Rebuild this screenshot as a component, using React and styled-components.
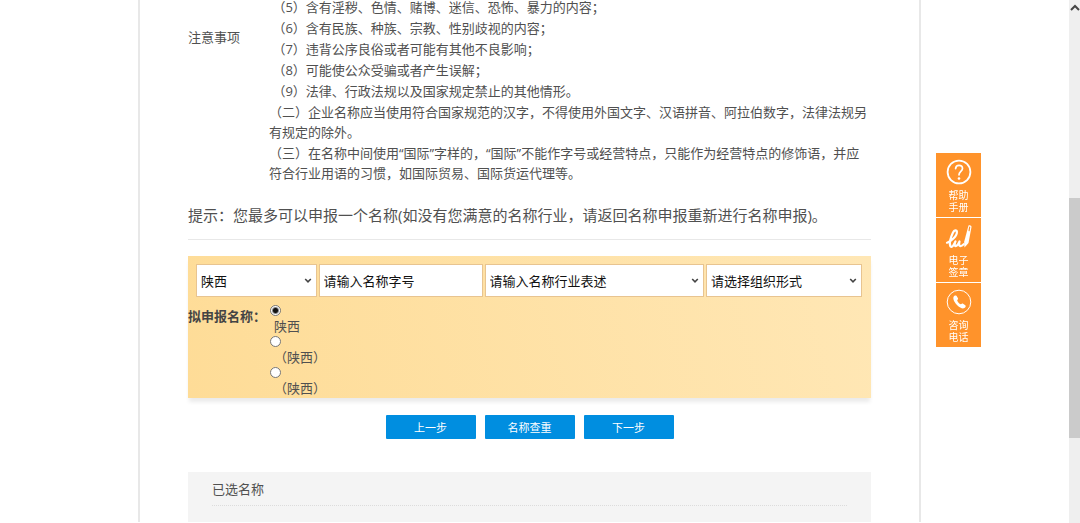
import React, { useState } from 'react';
import styled, { createGlobalStyle } from 'styled-components';

const colors = {
  text: '#505050',
  line: '#e8e8e8',
  blue: '#008ee0',
  orange: '#ff932b',
  field: '#e8c490'
};

const fonts = '"Open Sans", "Noto Sans CJK SC", sans-serif';

const GlobalStyle = createGlobalStyle`
  * {
    box-sizing: border-box;
  }
  body {
    margin: 0;
    overflow: hidden;
    background: #fff;
    color: ${colors.text};
    font-family: ${fonts};
    font-size: 13px;
    line-height: 20px;
    text-spacing-trim: space-all;
  }
  p, h2 {
    margin: 0;
  }
`;

const subRules = [
  '（5）含有淫秽、色情、赌博、迷信、恐怖、暴力的内容；',
  '（6）含有民族、种族、宗教、性别歧视的内容；',
  '（7）违背公序良俗或者可能有其他不良影响；',
  '（8）可能使公众受骗或者产生误解；',
  '（9）法律、行政法规以及国家规定禁止的其他情形。'
];

const rules = [
  '（二）企业名称应当使用符合国家规范的汉字，不得使用外国文字、汉语拼音、阿拉伯数字，法律法规另有规定的除外。',
  '（三）在名称中间使用“国际”字样的，“国际”不能作字号或经营特点，只能作为经营特点的修饰语，并应符合行业用语的习惯，如国际贸易、国际货运代理等。'
];

const names = ['陕西', '（陕西）', '（陕西）'];

const HelpIcon = () => (
  <svg width="26" height="26" viewBox="0 0 26 26" fill="none" stroke="#fff" strokeLinecap="round">
    <circle cx="13" cy="13" r="11.4" strokeWidth="1.8" />
    <path d="M9.600 9.600c.2-2.200 1.600-3.200 3.400-3.200s3.500 1.100 3.500 3.200c0 2.800-3.500 3-3.500 6.200" strokeWidth="1.7" />
    <circle cx="13" cy="19.500" r="1.300" fill="#fff" stroke="none" />
  </svg>
);

const SignIcon = () => (
  <svg width="28" height="26" viewBox="0 0 28 26" fill="none" stroke="#fff" strokeLinecap="round" strokeLinejoin="round">
    <path
      d="M2 18.800c4.200-1.200 10.200-7 9.900-11-.2-2.200-2.600-1.800-3.900.7C6.300 12 4 18.500 5.300 22c.6 1.600 2.400.6 3.400-1.200l1.800-3.400c-.9 2-1.300 4.900.3 4.800 1.800-.1 3-3.400 3.700-4.800-.5 2.200-.7 4.800.9 4.700 1.200-.1 2.200-.8 3.300-1.900"
      strokeWidth="2.200"
    />
    <path d="M23.500 1.400c1.500-.7 3.200.1 3 1.700l-3 15.800-4 4.500-.4-5.400z" fill="#fff" stroke="none" />
    <path d="M24.700 3.200l-.6 3.400" stroke={colors.orange} strokeWidth="1.200" />
  </svg>
);

const PhoneIcon = () => (
  <svg width="26" height="26" viewBox="0 0 26 26">
    <circle cx="13" cy="13" r="11.800" fill="none" stroke="#fff" strokeWidth="1" />
    <path
      d="M7.600 7.800c.7-1.200 2.100-1.700 3-.8l1.400 2.200c.5 1-.9 1.600-.8 2.400.3 1.400 2.100 3.300 3.500 3.700.9.200 1.500-1 2.400-.6l2.200 1.500c1 1 .2 2.100-.9 2.900-1.700 1.100-4.500-.2-6.900-2.500C9 14.100 6.500 10.400 7.600 7.800z"
      fill="#fff"
    />
  </svg>
);

const Chevron = () => (
  <svg width="8" height="6" viewBox="0 0 8 6" fill="none" stroke="#444" strokeWidth="1.600">
    <path d="M1.200 1l2.800 2.800L6.800 1" />
  </svg>
);

const sideLinks = [
  { id: 'help', icon: <HelpIcon />, lines: ['帮助', '手册'] },
  { id: 'sign', icon: <SignIcon />, lines: ['电子', '签章'] },
  { id: 'phone', icon: <PhoneIcon />, lines: ['咨询', '电话'] }
];

const SelectField = ({ label, grow }) => (
  <Field $grow={grow}>
    <Select aria-label={label} defaultValue={label}>
      <option value={label}>{label}</option>
    </Select>
    <Chevron />
  </Field>
);

const App = () => {
  const [selected, setSelected] = useState(0);

  return (
    <Page>
      <GlobalStyle />
      <Main>
        <Panel>
          <Notice>
            <NoticeTitle>注意事项</NoticeTitle>
            <NoticeBody>
              {subRules.map((rule) => <p key={rule}>{'\u00a0'}{rule}</p>)}
              {rules.map((rule) => <p key={rule}>{rule}</p>)}
            </NoticeBody>
          </Notice>

          <Hint>提示：您最多可以申报一个名称(如没有您满意的名称行业，请返回名称申报重新进行名称申报)。</Hint>

          <NameForm>
            <Fields>
              <SelectField label="陕西" grow={120} />
              <Field $grow={164}>
                <Input type="text" aria-label="请输入名称字号" placeholder="请输入名称字号" />
              </Field>
              <SelectField label="请输入名称行业表述" grow={220} />
              <SelectField label="请选择组织形式" grow={156} />
            </Fields>
            <Choice role="radiogroup" aria-labelledby="choice-title">
              <ChoiceTitle id="choice-title">拟申报名称：</ChoiceTitle>
              <div>
                {names.map((name, i) => (
                  <Option key={i}>
                    <Radio name="fullName" checked={selected === i} onChange={() => setSelected(i)} />
                    <span>{name}</span>
                  </Option>
                ))}
              </div>
            </Choice>
          </NameForm>

          <Actions>
            <Button type="button">上一步</Button>
            <Button type="button">名称查重</Button>
            <Button type="button">下一步</Button>
          </Actions>

          <Selected>
            <h2>已选名称</h2>
          </Selected>
        </Panel>
      </Main>

      <Scrollbar aria-hidden="true">
        <svg width="11" height="14" viewBox="0 0 11 14" fill="none" stroke="#444" strokeWidth="2">
          <path d="M2 10l4-4 4 4" />
        </svg>
        <Thumb />
      </Scrollbar>

      <SideBar>
        {sideLinks.map(({ id, icon, lines }) => (
          <SideLink key={id} href={`#${id}`}>
            {icon}
            {lines.map((line) => <span key={line}>{line}</span>)}
          </SideLink>
        ))}
      </SideBar>
    </Page>
  );
};

const Page = styled.div`
  display: flex;
  height: 100vh;
  overflow: hidden;
`;

const Main = styled.main`
  flex: 1;
  min-width: 0;
  padding: 0 148px 0 138px;
`;

const Panel = styled.div`
  min-height: 100%;
  padding: 0 48px;
  border: solid ${colors.line};
  border-width: 0 2px;
`;

const Notice = styled.section`
  display: flex;
  margin-top: -3px;
`;

const NoticeTitle = styled.div`
  flex: 0 0 81px;
  padding-top: 30px;
`;

const NoticeBody = styled.div`
  display: flex;
  flex: 1;
  flex-direction: column;
  gap: 1px;
`;

const Hint = styled.p`
  padding: 22px 0 14px;
  border-bottom: 1px solid ${colors.line};
  font-size: 15px;
  white-space: nowrap;
`;

const NameForm = styled.form`
  margin-top: 16px;
  padding-top: 8px;
  background: linear-gradient(75deg, #fedc97, #ffe7b5);
  box-shadow: 0 5px 4px -1px #ebebeb;
`;

const Fields = styled.div`
  display: flex;
  gap: 2px;
  padding: 0 9px 0 8px;
`;

const Field = styled.div`
  position: relative;
  flex: ${({ $grow }) => $grow} 1 0;
  min-width: 0;
  height: 33px;
  border: 1px solid ${colors.field};
  background: #fff;
  svg {
    position: absolute;
    top: 13px;
    right: 4px;
    pointer-events: none;
  }
`;

const Select = styled.select`
  appearance: none;
  width: 100%;
  height: 100%;
  padding: 0 16px 0 4px;
  border: 0;
  background: transparent;
  color: #111;
  font: 13px ${fonts};
`;

const Input = styled.input`
  width: 100%;
  height: 100%;
  padding: 0 4px;
  border: 0;
  background: transparent;
  color: #111;
  font: 13px ${fonts};
  &::placeholder {
    color: #111;
    opacity: 1;
  }
`;

const Choice = styled.div`
  display: flex;
  padding-top: 8px;
`;

const ChoiceTitle = styled.div`
  flex: 0 0 82px;
  padding-top: 1px;
  color: #444;
  font-weight: bold;
`;

const Option = styled.label`
  display: flex;
  flex-direction: column;
  span {
    padding-left: 4px;
  }
`;

const Radio = styled.input.attrs({ type: 'radio' })`
  appearance: none;
  width: 11px;
  height: 11px;
  margin: 0;
  border: 1px solid #777;
  border-radius: 50%;
  background: #fff;
  &:checked {
    background: radial-gradient(circle, #111 0 2px, #fff 4px);
  }
`;

const Actions = styled.div`
  display: flex;
  justify-content: center;
  gap: 9px;
  margin: 17px 0 33px;
`;

const Button = styled.button`
  width: 90px;
  height: 24px;
  padding: 0;
  border: 0;
  border-radius: 1px;
  background: ${colors.blue};
  color: #fff;
  font: 11px ${fonts};
  cursor: pointer;
`;

const Selected = styled.section`
  padding: 7px 24px 16px;
  background: #f4f4f4;
  h2 {
    padding-bottom: 6px;
    border-bottom: 1px dotted #dcdcdc;
    font-size: 13px;
    font-weight: normal;
  }
`;

const Scrollbar = styled.div`
  display: flex;
  flex: 0 0 11px;
  flex-direction: column;
  background: #efefef;
`;

const Thumb = styled.div`
  height: 240px;
  margin-top: 184px;
  background: #cbcbcb;
`;

/* floats over the page, next to the panel */
const SideBar = styled.nav`
  position: fixed;
  top: 153px;
  right: 99px;
  display: flex;
  flex-direction: column;
  gap: 1px;
`;

const SideLink = styled.a`
  display: flex;
  flex-direction: column;
  align-items: center;
  width: 45px;
  height: 64px;
  padding-top: 6px;
  background: ${colors.orange};
  color: #fff;
  font-size: 10px;
  line-height: 12px;
  text-decoration: none;
  svg {
    margin-bottom: 4px;
  }
`;

export default App;
